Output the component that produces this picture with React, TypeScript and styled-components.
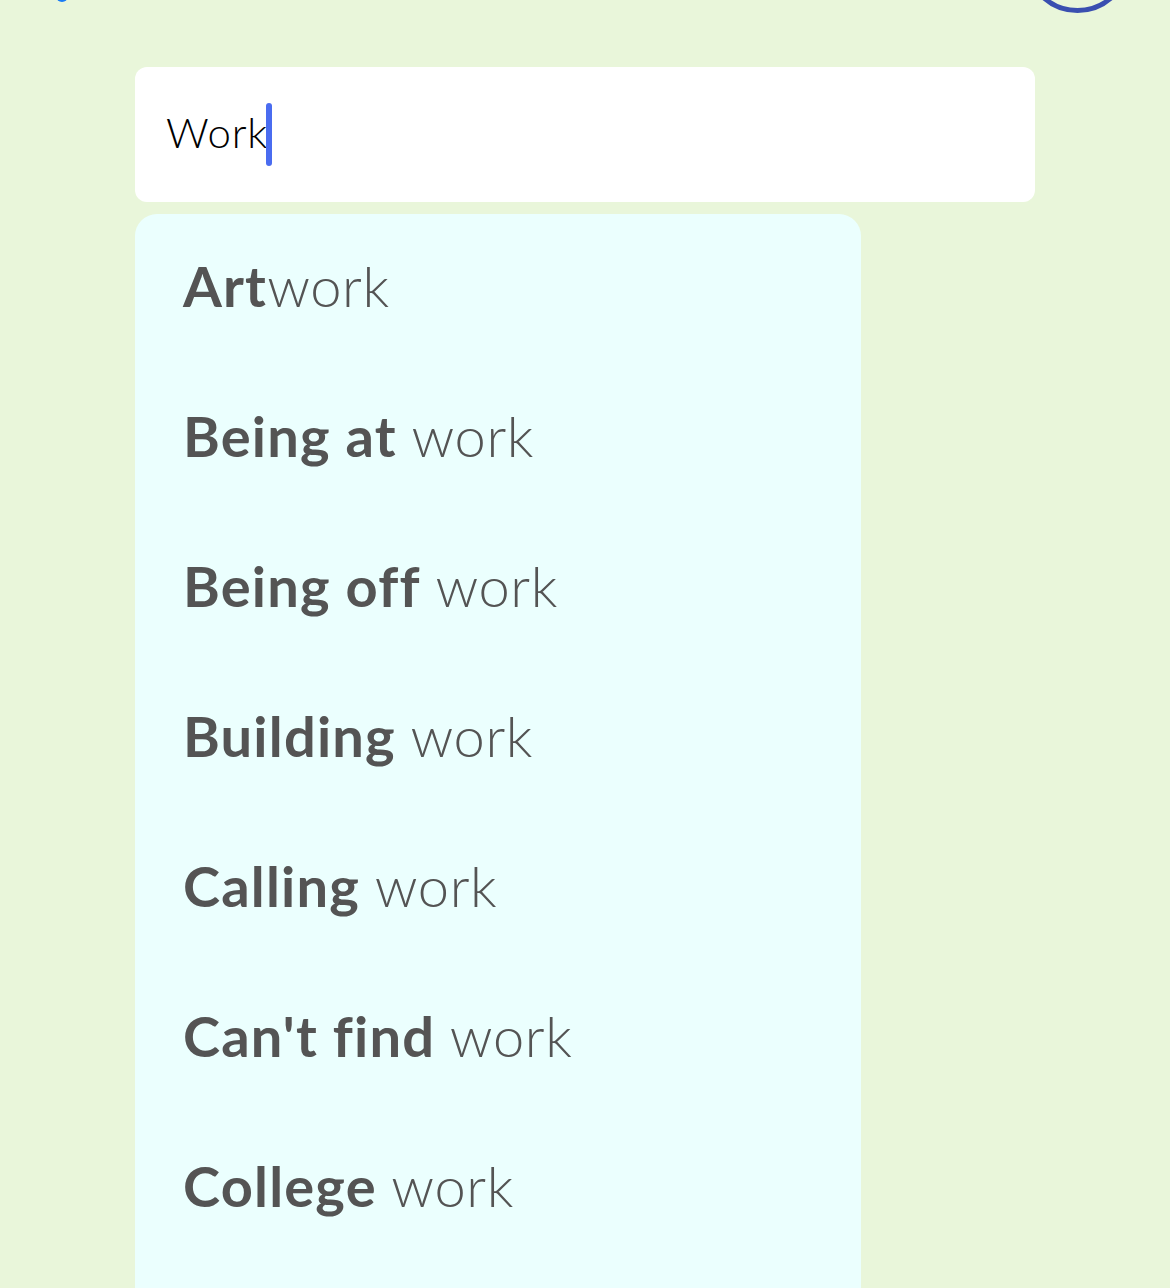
import React from "react"
import styled, { createGlobalStyle } from "styled-components"

const GlobalStyle = createGlobalStyle`
  html, body {
    margin: 0;
    padding: 0;
    background: #e9f6da;
    font-family: Lato, "Noto Sans", sans-serif;
  }
`

const suggestions: { prefix: string; suffix: string }[] = [
  { prefix: "Art", suffix: "work" },
  { prefix: "Being at", suffix: " work" },
  { prefix: "Being off", suffix: " work" },
  { prefix: "Building", suffix: " work" },
  { prefix: "Calling", suffix: " work" },
  { prefix: "Can't find", suffix: " work" },
  { prefix: "College", suffix: " work" },
]

export default function App() {
  return (
    <>
      <GlobalStyle />
      <S.Page>
        <S.TopBar>
          <S.Dot />
          <S.Ring />
        </S.TopBar>
        <S.Content>
          <S.SearchBox>
            <S.Query>Work</S.Query>
            <S.Caret />
          </S.SearchBox>
          <S.Dropdown>
            {suggestions.map((s) => (
              <S.Item key={s.prefix}>
                <b>{s.prefix}</b>
                <span>{s.suffix}</span>
              </S.Item>
            ))}
          </S.Dropdown>
        </S.Content>
      </S.Page>
    </>
  )
}

const S = {
  Page: styled.div`
    width: 1170px;
    height: 1288px;
    overflow: hidden;
    position: relative;
  `,
  TopBar: styled.div`
    position: absolute;
    top: -94px;
    left: 0;
    right: 0;
    height: 107px;
  `,
  Dot: styled.div`
    position: absolute;
    left: 56px;
    top: 84px;
    width: 12px;
    height: 12px;
    border-radius: 50%;
    background: #1a7cf5;
  `,
  Ring: styled.div`
    position: absolute;
    left: 1024px;
    top: 0;
    width: 97px;
    height: 97px;
    border: 5px solid #3a4fb0;
    border-radius: 50%;
  `,
  Content: styled.div`
    display: flex;
    flex-direction: column;
    align-items: flex-start;
    gap: 12px;
    height: 100%;
    box-sizing: border-box;
    padding: 67px 0 0 135px;
  `,
  SearchBox: styled.div`
    display: flex;
    align-items: center;
    flex: none;
    width: 900px;
    height: 135px;
    box-sizing: border-box;
    padding: 0 31px;
    background: #ffffff;
    border-radius: 12px;
  `,
  Query: styled.span`
    font-size: 42px;
    font-weight: 300;
    color: #000;
    letter-spacing: 0.8px;
    margin-top: -5px;
  `,
  Caret: styled.span`
    width: 6px;
    height: 63px;
    margin-left: -2px;
    background: #4a6cf0;
    border-radius: 3px;
  `,
  Dropdown: styled.div`
    flex: 1;
    width: 726px;
    background: #ebfffe;
    border-radius: 22px 22px 0 0;
  `,
  Item: styled.div`
    height: 150px;
    box-sizing: border-box;
    padding: 0 0 8px 48px;
    display: flex;
    align-items: center;
    font-size: 56px;
    color: #545454;
    white-space: pre;
    b {
      font-weight: 700;
      letter-spacing: 1.2px;
    }
    span {
      font-weight: 300;
      letter-spacing: 0.6px;
    }
  `,
}
